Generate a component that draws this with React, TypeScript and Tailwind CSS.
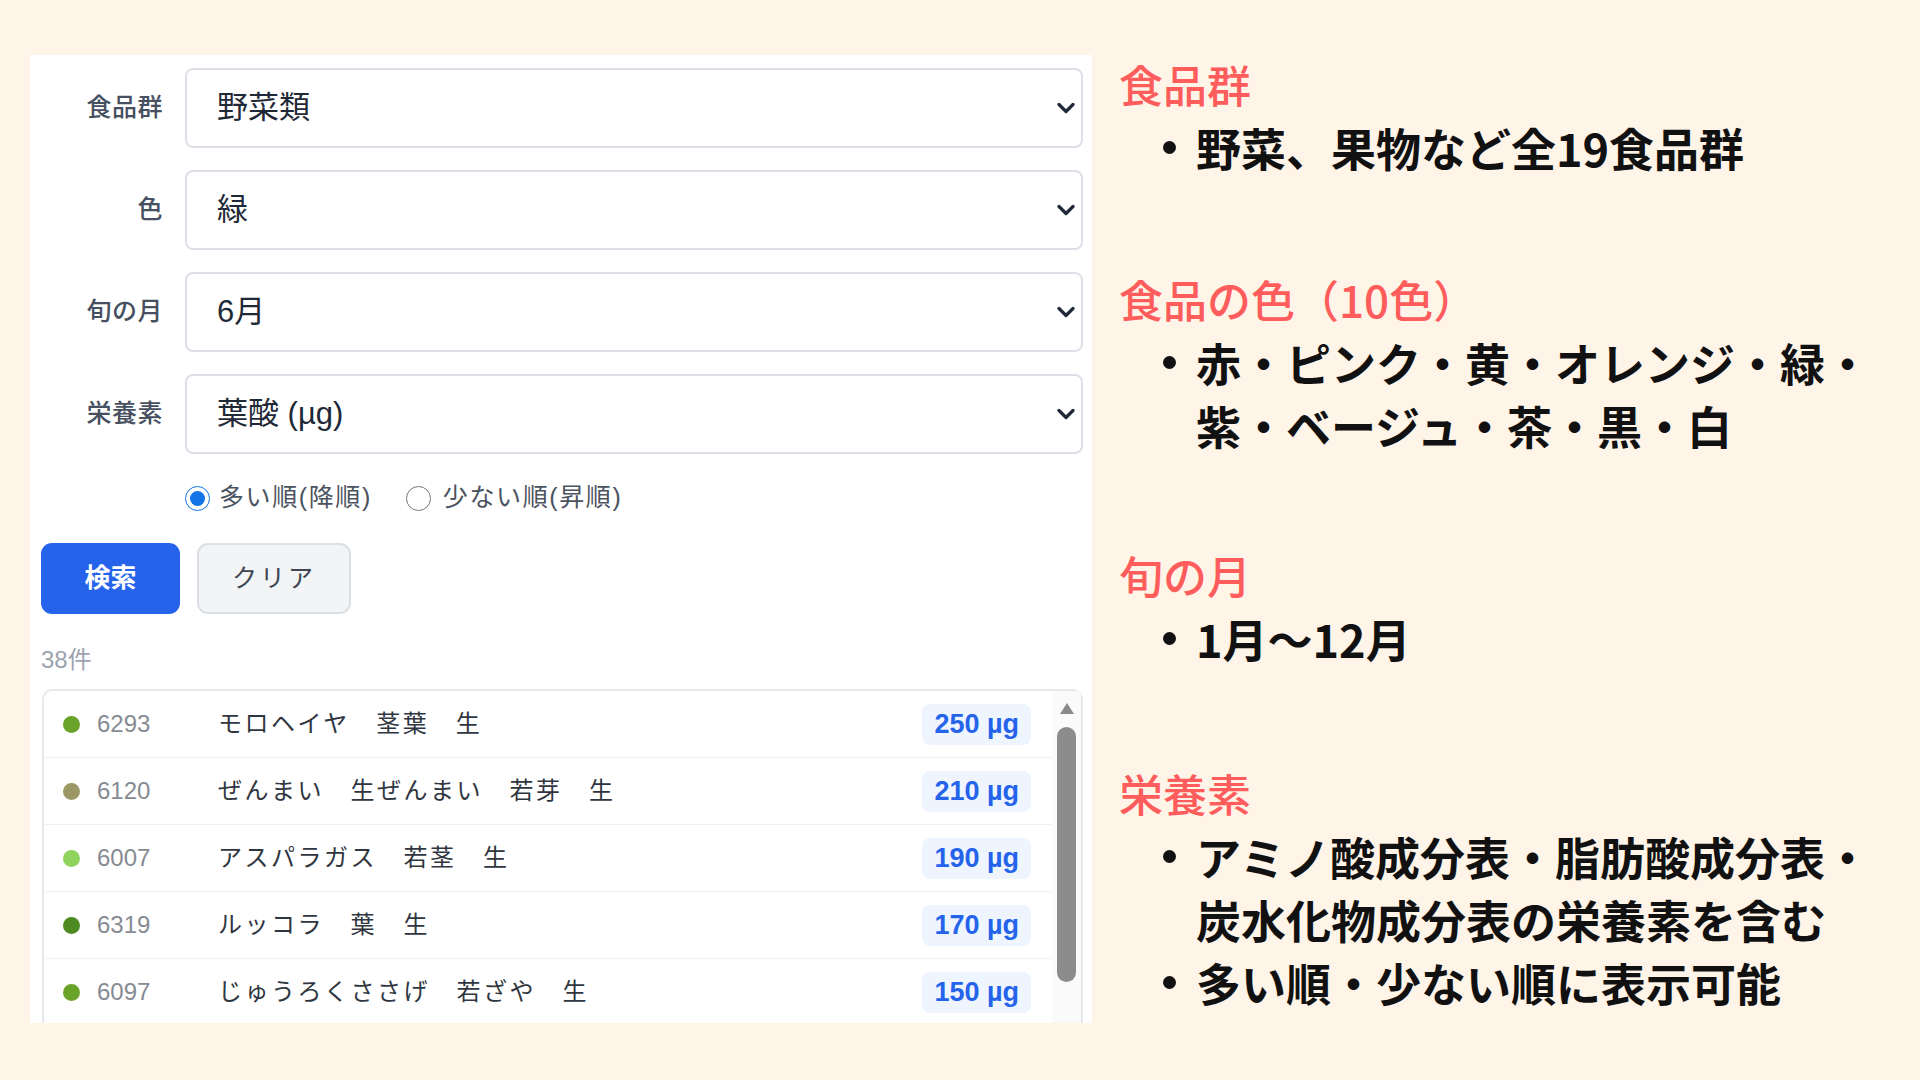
import React from "react";

type Food = {
  dot: string;
  code: string;
  name: string;
  amount: string;
};

const filters = [
  { label: "食品群", value: "野菜類" },
  { label: "色", value: "緑" },
  { label: "旬の月", value: "6月" },
  { label: "栄養素", value: "葉酸 (µg)" },
];

const foods: Food[] = [
  { dot: "bg-[#6aa329]", code: "6293", name: "モロヘイヤ　茎葉　生", amount: "250 µg" },
  { dot: "bg-[#9c9866]", code: "6120", name: "ぜんまい　生ぜんまい　若芽　生", amount: "210 µg" },
  { dot: "bg-[#8fd35c]", code: "6007", name: "アスパラガス　若茎　生", amount: "190 µg" },
  { dot: "bg-[#4e8a22]", code: "6319", name: "ルッコラ　葉　生", amount: "170 µg" },
  { dot: "bg-[#6aa329]", code: "6097", name: "じゅうろくささげ　若ざや　生", amount: "150 µg" },
];

const notes = [
  { title: "食品群", items: ["野菜、果物など全19食品群"], gap: "" },
  {
    title: "食品の色（10色）",
    items: ["赤・ピンク・黄・オレンジ・緑・紫・ベージュ・茶・黒・白"],
    gap: "mt-[94px]",
  },
  { title: "旬の月", items: ["1月〜12月"], gap: "mt-[92px]" },
  {
    title: "栄養素",
    items: [
      "アミノ酸成分表・脂肪酸成分表・炭水化物成分表の栄養素を含む",
      "多い順・少ない順に表示可能",
    ],
    gap: "mt-[97px]",
  },
];

const Chevron = () => (
  <svg width="18" height="12" viewBox="0 0 18 12" fill="none">
    <polyline
      points="2,2.5 9,9.5 16,2.5"
      stroke="#1f2937"
      strokeWidth="3.2"
      strokeLinecap="round"
      strokeLinejoin="round"
    />
  </svg>
);

const FilterRow = ({ label, value }: { label: string; value: string }) => (
  <div className="flex items-center gap-[22px]">
    <span className="w-[122px] text-right text-[25px] font-medium tracking-[0.5px] text-[#465060]">
      {label}
    </span>
    <div className="flex h-[80px] flex-1 items-center justify-between rounded-[8px] border-2 border-[#dde1e7] pl-[30px] pr-[6px]">
      <span className="text-[31px] text-[#1f2937]">{value}</span>
      <Chevron />
    </div>
  </div>
);

const FoodRow = ({ food }: { food: Food }) => (
  <div className="flex h-[67px] items-center border-b border-[#f0f1f3] pl-[19px] pr-[21px]">
    <span className={`h-[17px] w-[17px] shrink-0 rounded-full ${food.dot}`} />
    <span className="ml-[17px] w-[121px] text-[24px] text-[#868b93]">{food.code}</span>
    <span className="flex-1 text-[24px] tracking-[2.5px] text-[#2f3640]">{food.name}</span>
    <span className="flex h-[41px] items-center rounded-[8px] bg-[#eef5ff] px-[12px] text-[27px] leading-none font-bold text-[#2563eb]">
      {food.amount}
    </span>
  </div>
);

const SearchPanel = () => (
  <div className="mt-[55px] ml-[30px] h-[968px] w-[1062px] shrink-0 overflow-hidden bg-white pt-[13px] pr-[9px] pl-[11px] font-['Liberation_Sans','Noto_Sans_CJK_JP',sans-serif]">
    <div className="flex flex-col gap-[22px]">
      {filters.map((f) => (
        <FilterRow key={f.label} label={f.label} value={f.value} />
      ))}
    </div>

    <div className="mt-[31px] flex h-[26px] items-center pl-[144px] text-[25px] tracking-[1.6px] text-[#4b5360]">
      <label className="flex items-center gap-[9px]">
        <input
          type="radio"
          name="order"
          defaultChecked
          className="m-0 h-[25px] w-[25px] accent-[#1473e6]"
        />
        多い順(降順)
      </label>
      <label className="ml-[34px] flex items-center gap-[12px]">
        <input type="radio" name="order" className="m-0 h-[25px] w-[25px]" />
        少ない順(昇順)
      </label>
    </div>

    <div className="mt-[32px] flex gap-[17px]">
      <button className="h-[71px] w-[139px] rounded-[11px] bg-[#2563eb] text-[26px] font-bold text-white">
        検索
      </button>
      <button className="h-[71px] w-[154px] rounded-[11px] border-2 border-[#dcdfe4] bg-[#f3f4f6] text-[25px] tracking-[3px] text-[#3f4652]">
        クリア
      </button>
    </div>

    <p className="mt-[32px] h-[28px] text-[24px] leading-[28px] text-[#9ca3af]">38件</p>

    <div className="mt-[15px] ml-px flex rounded-t-[10px] border-2 border-b-0 border-[#e6e8ec]">
      <div className="flex-1">
        {foods.map((food) => (
          <FoodRow key={food.code} food={food} />
        ))}
      </div>
      <div className="flex w-[29px] flex-col items-center bg-[#fafafa] pt-[12px]">
        <svg width="14" height="11" viewBox="0 0 14 11">
          <polygon points="7,0 14,11 0,11" fill="#8a8a8a" />
        </svg>
        <div className="mt-[13px] h-[255px] w-[19px] rounded-full bg-[#8c8c8c]" />
      </div>
    </div>
  </div>
);

const Note = ({ title, items, gap }: { title: string; items: string[]; gap: string }) => (
  <section className={gap}>
    <h2 className="h-[52px] text-[44px] leading-[52px] font-medium text-[#ff5c5c]">{title}</h2>
    <ul className="mt-[6px]">
      {items.map((item) => (
        <li key={item} className="flex items-start pl-[44px]">
          <span className="mt-[25px] h-[13px] w-[13px] shrink-0 rounded-full bg-[#111111]" />
          <span className="ml-[20px] w-[690px] text-[45px] leading-[63px] font-bold text-[#111111]">
            {item}
          </span>
        </li>
      ))}
    </ul>
  </section>
);

export default function App() {
  return (
    <div className="flex min-h-screen w-full bg-[#fef4e8]">
      <SearchPanel />
      <div className="ml-[27px] pt-[58px] font-['Noto_Sans_CJK_JP',sans-serif]">
        {notes.map((n) => (
          <Note key={n.title} title={n.title} items={n.items} gap={n.gap} />
        ))}
      </div>
    </div>
  );
}
